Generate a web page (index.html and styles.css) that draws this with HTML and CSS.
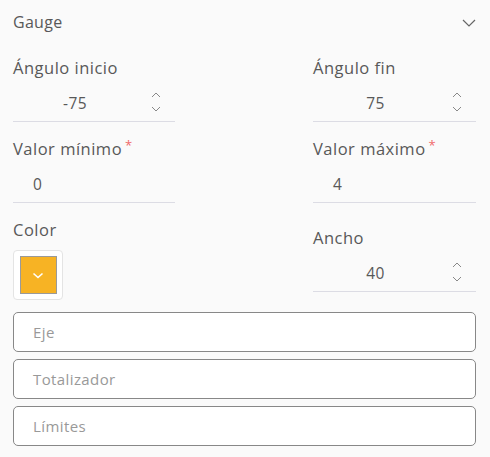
FILE: index.html
```html
<!DOCTYPE html>
<html lang="es">
<head>
<meta charset="utf-8">
<link rel="stylesheet" href="styles.css">
</head>
<body>
<div class="panel">
  <div class="header">
    <span class="title">Gauge</span>
    <svg class="chev" width="14" height="8" viewBox="0 0 14 8"><path d="M1 1 L7 7 L13 1" fill="none" stroke="#666" stroke-width="1.2"/></svg>
  </div>
  <div class="grid">
    <div class="field">
      <div class="label">Ángulo inicio</div>
      <div class="input num">
        <span class="val">-75</span>
        <span class="spin">
          <svg width="10" height="6" viewBox="0 0 10 6"><path d="M1 5 L5 1 L9 5" fill="none" stroke="#888" stroke-width="1"/></svg>
          <svg width="10" height="6" viewBox="0 0 10 6"><path d="M1 1 L5 5 L9 1" fill="none" stroke="#888" stroke-width="1"/></svg>
        </span>
      </div>
    </div>
    <div class="field">
      <div class="label">Ángulo fin</div>
      <div class="input num">
        <span class="val">75</span>
        <span class="spin">
          <svg width="10" height="6" viewBox="0 0 10 6"><path d="M1 5 L5 1 L9 5" fill="none" stroke="#888" stroke-width="1"/></svg>
          <svg width="10" height="6" viewBox="0 0 10 6"><path d="M1 1 L5 5 L9 1" fill="none" stroke="#888" stroke-width="1"/></svg>
        </span>
      </div>
    </div>
    <div class="field">
      <div class="label">Valor mínimo<span class="req">*</span></div>
      <div class="input text"><span class="val">0</span></div>
    </div>
    <div class="field">
      <div class="label">Valor máximo<span class="req">*</span></div>
      <div class="input text"><span class="val">4</span></div>
    </div>
    <div class="field">
      <div class="label">Color</div>
      <div class="picker">
        <div class="swatch">
          <svg width="12" height="7" viewBox="0 0 12 7"><path d="M1.5 1.5 L6 5.5 L10.5 1.5" fill="none" stroke="#fff" stroke-width="1.6"/></svg>
        </div>
      </div>
    </div>
    <div class="field">
      <div class="label">Ancho</div>
      <div class="input num">
        <span class="val">40</span>
        <span class="spin">
          <svg width="10" height="6" viewBox="0 0 10 6"><path d="M1 5 L5 1 L9 5" fill="none" stroke="#888" stroke-width="1"/></svg>
          <svg width="10" height="6" viewBox="0 0 10 6"><path d="M1 1 L5 5 L9 1" fill="none" stroke="#888" stroke-width="1"/></svg>
        </span>
      </div>
    </div>
  </div>
  <div class="sections">
    <div class="section">Eje</div>
    <div class="section">Totalizador</div>
    <div class="section">Límites</div>
  </div>
</div>
</body>
</html>
```
FILE: styles.css
```css
html, body {
  margin: 0;
  padding: 0;
  background: #fafafa;
}
body {
  font-family: "Open Sans", "Noto Sans", sans-serif;
  color: #585858;
}
.panel {
  padding: 0 14px 0 13px;
}
.header {
  height: 44px;
  display: flex;
  align-items: center;
  justify-content: space-between;
}
.title {
  font-size: 16px;
  letter-spacing: 0.3px;
}
.chev {
  margin-top: 2px;
}
.grid {
  margin-top: 12px;
  display: grid;
  grid-template-columns: 162px 163px;
  justify-content: space-between;
  row-gap: 15px;
  align-items: center;
}
.label {
  font-size: 16.5px;
  line-height: 24px;
  letter-spacing: 0.5px;
  height: 24px;
}
.req {
  color: #f06a6a;
  font-size: 13px;
  vertical-align: top;
  margin-left: 3px;
  line-height: 16px;
}
.input {
  height: 37px;
  border-bottom: 1.5px solid #dcdce4;
  display: flex;
  align-items: center;
  margin-top: 4px;
  font-size: 15.5px;
  letter-spacing: 0.4px;
}
.input.num .val {
  flex: 1;
  text-align: center;
  padding-right: 38px;
}
.input.num {
  position: relative;
}
.spin {
  position: absolute;
  right: 14px;
  top: 8px;
  display: flex;
  flex-direction: column;
  gap: 8px;
}
.spin svg {
  display: block;
}
.input.text .val {
  padding-left: 20px;
}
.picker {
  margin-top: 8px;
  width: 48px;
  height: 48px;
  border: 1px solid #e4e4e4;
  border-radius: 4px;
  background: #fff;
  display: flex;
  align-items: center;
  justify-content: center;
}
.swatch {
  width: 35px;
  height: 36px;
  background: #f7b324;
  border: 1px solid #9a9a9a;
  display: flex;
  align-items: center;
  justify-content: center;
}
.swatch svg {
  display: block;
}
.sections {
  margin-top: 12px;
  display: flex;
  flex-direction: column;
  gap: 7px;
}
.section {
  height: 38px;
  border: 1px solid #888;
  border-radius: 5px;
  background: #fff;
  display: flex;
  align-items: center;
  padding-left: 19px;
  font-size: 15px;
  color: #999;
  letter-spacing: 0.4px;
}
```
